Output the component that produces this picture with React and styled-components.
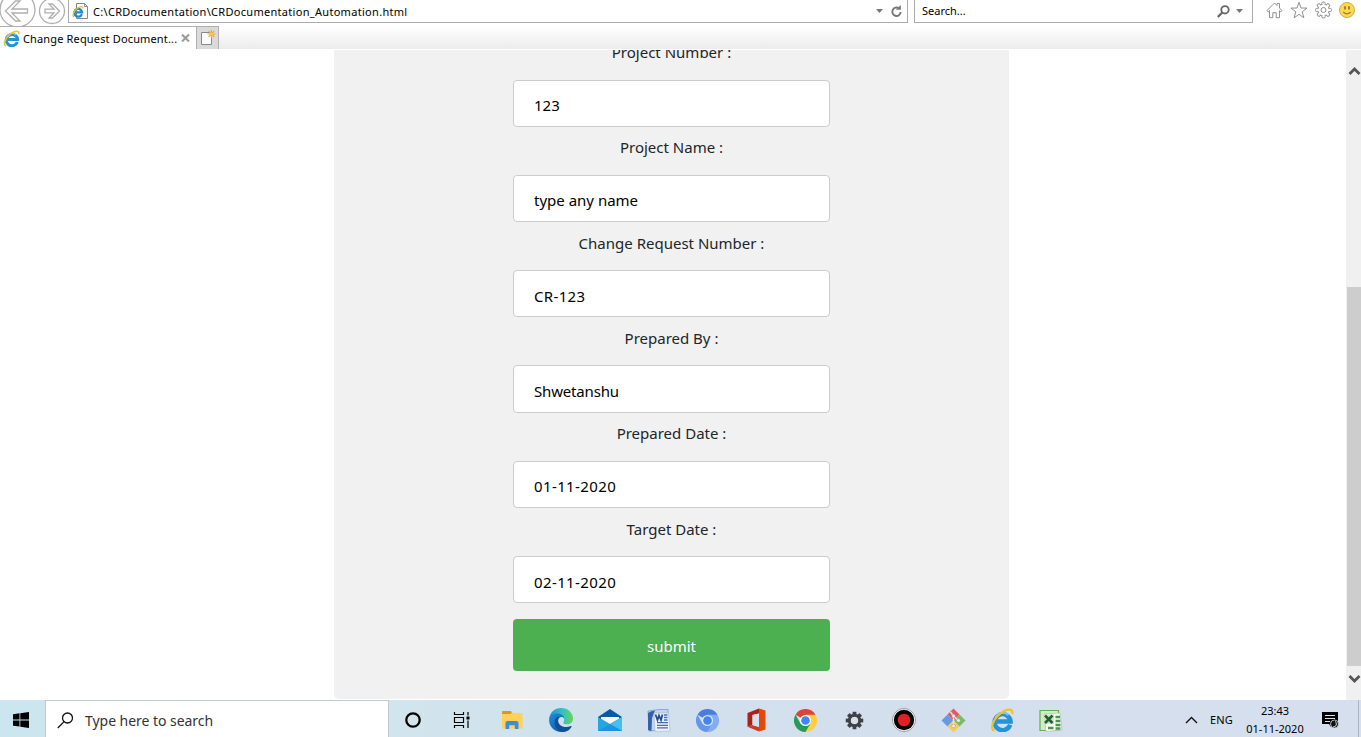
import React from "react";
import styled, { createGlobalStyle } from "styled-components";

const Global = createGlobalStyle`
  * { box-sizing: border-box; }
  body { margin: 0; background: #fff; overflow: hidden; font-family: "Noto Sans", "Open Sans", sans-serif; }
  svg { display: block; flex: none; }
`;

const Screen = styled.div`
  width: 1361px;
  height: 737px;
  display: flex;
  flex-direction: column;
  overflow: hidden;
`;
const NavBar = styled.header`
  height: 26px;
  flex: none;
  display: flex;
  align-items: flex-start;
  background: #fff;
`;
const BarBox = styled.div`
  height: 23px;
  width: ${(p) => p.$width}px;
  margin-right: ${(p) => p.$after}px;
  padding: 0 ${(p) => p.$right}px 0 ${(p) => p.$left}px;
  border: 1px solid #ababab;
  border-top: 0;
  display: flex;
  align-items: center;
`;
const BarActions = styled.div`
  display: flex;
  align-items: center;
  gap: ${(p) => p.$gap}px;
  margin-left: auto;
`;
const Text = styled.span`
  font-size: ${(p) => p.$size || 11}px;
  letter-spacing: ${(p) => p.$track || 0}px;
  color: ${(p) => p.$color || "#000"};
  line-height: 16px;
  white-space: pre;
`;
const Address = styled(Text)`
  margin-left: 4px;
  padding-top: 1px;
`;
const ToolIcons = styled.div`
  display: flex;
  gap: 7px;
  padding-top: 1px;
  margin-left: 12.6px;
`;
const TabStrip = styled.div`
  height: 23px;
  flex: none;
  display: flex;
  background: linear-gradient(#fff, #ececec);
`;
const Tab = styled.div`
  width: 196px;
  border-top: 1px solid #b0b0b0;
  background: #fff;
  display: flex;
  align-items: center;
  padding: 0 6px 0 3px;
`;
const TabTitle = styled(Text)`
  margin-left: 3px;
  padding-top: 1px;
  flex: 1;
`;
const NewTab = styled.div`
  width: 23px;
  border: 1px solid #b0b0b0;
  border-bottom: 0;
  background: #dadada;
  display: flex;
  justify-content: center;
  align-items: center;
`;
const Page = styled.main`
  height: 650px;
  margin-top: 1px;
  flex: none;
  display: flex;
  justify-content: space-between;
  overflow: hidden;
`;
const Sheet = styled.div`
  flex: 1;
  display: flex;
  justify-content: center;
  padding-right: 3px;
`;
const Panel = styled.form`
  width: 675px;
  height: 649px;
  border-radius: 0 0 5px 5px;
  background: #f1f1f1;
  display: flex;
  flex-direction: column;
  align-items: center;
  overflow: hidden;
`;
const Fields = styled.div`
  margin-top: -8.9px;
`;
const Field = styled.div`
  width: 317px;
  height: 95.3px;
  display: flex;
  flex-direction: column;
  align-items: center;
`;
const Label = styled.label`
  height: 24px;
  line-height: 23px;
  font-size: 15px;
  color: #212529;
  white-space: pre;
`;
const Input = styled.div`
  width: 317px;
  height: 47.3px;
  margin-top: 14.45px;
  padding: 2.6px 20px 0;
  border: 1px solid #ccc;
  border-radius: 4px;
  background: #fff;
  color: #000;
  font-size: 15px;
  line-height: 44px;
  letter-spacing: ${(p) => p.$track}px;
  white-space: pre;
`;
const Submit = styled.button`
  width: 317px;
  height: 52px;
  margin-top: 6.1px;
  padding: 3px 0 0;
  border: 0;
  border-radius: 4px;
  background: #4caf50;
  color: #fff;
  font: 15px "Noto Sans", sans-serif;
`;
const Scrollbar = styled.div`
  width: 15px;
  background: #f0f0f0;
  display: flex;
  flex-direction: column;
  align-items: flex-end;
`;
const ScrollArrow = styled.div`
  height: ${(p) => p.$height}px;
  padding-top: ${(p) => p.$top}px;
`;
const Thumb = styled.div`
  width: 14px;
  height: 379px;
  background: #cdcdcd;
`;
const Taskbar = styled.footer`
  height: 37px;
  flex: none;
  display: flex;
  background: linear-gradient(90deg, #cbe6ee, #d1e5ed 30%, #d0e0ec 45%, #d4dfed 65%, #d6dfee);
`;
const Start = styled.div`
  width: 45px;
  display: flex;
  align-items: center;
  justify-content: center;
  padding: 3px 3px 0 0;
`;
const TaskSearch = styled.div`
  width: 344px;
  border: 1px solid #c3c9cc;
  border-bottom: 0;
  background: #fff;
  display: flex;
  align-items: center;
  gap: 11px;
  padding: 3px 0 0 11px;
`;
const Apps = styled.div`
  flex: 1;
  display: flex;
`;
const AppSlot = styled.div`
  width: 49.1px;
  display: flex;
  justify-content: center;
  align-items: center;
  padding: 3px ${(p) => p.$nudge || 0}px 0 0;
`;
const Tray = styled.div`
  display: flex;
  align-items: center;
  padding-top: 3px;
`;
const Language = styled(Text)`
  margin-left: 12px;
`;
const Clock = styled.div`
  width: 70px;
  margin: 0 12px 0 7px;
  display: flex;
  flex-direction: column;
  align-items: center;
  gap: 2px;
`;
const ShowDesktop = styled.div`
  width: 3px;
  margin-left: 19px;
  border-left: 1px solid #a9b3c1;
`;

const IeLogo = ({ size = 17 }) => (
  <svg width={size} height={size} viewBox="0 0 24 24" fill="none">
    <path d="M20.200 16.800A8 8 0 1 1 20.600 13.500H7" stroke="#2593d8" strokeWidth="4.400" />
    <path d="M5.300 10.500a8 8 0 0 1 13.200-3.500" stroke="#6fcdf6" strokeWidth="2" />
    <path d="M4.500 22.600C-.8 21.500 3 11.500 10.500 5.500C16.500.8 23.500-.2 22.300 6" stroke="#f3c321" strokeWidth="2.200" />
  </svg>
);
const PageIe = () => (
  <svg width="17" height="18" viewBox="0 0 17 18">
    <path d="M4.500 1.500h8l3 3v12h-11z" fill="#fff" stroke="#888" />
    <path d="M12.500 1.500v3h3" fill="none" stroke="#888" />
    <g transform="translate(0 3.800) scale(.49)" fill="none">
      <path d="M20.200 16.800A8 8 0 1 1 20.600 13.500H7" stroke="#1b8ccc" strokeWidth="4.600" />
      <path d="M4.500 22.600C-.8 21.500 3 11.500 10.500 5.500C16.500.8 23.500-.2 22.300 6" stroke="#eec01f" strokeWidth="2.500" />
    </g>
  </svg>
);
const BackForward = () => (
  <svg width="68" height="26" viewBox="0 0 68 26" fill="none" stroke="#b0b0b0" strokeWidth="1.300">
    <circle cx="17.500" cy="9.500" r="17.500" />
    <circle cx="52" cy="11" r="12.500" />
    <path d="M5.500 11l10-10h4.500l-8 8h15.500v4H12l8 8h-4.500z" />
    <path d="M59.500 11l-7-7H49l5 5.200h-9v3.600h9L49 18h3.500z" />
  </svg>
);
const Caret = () => (
  <svg width="7" height="4" viewBox="0 0 7 4"><path d="M0 0h7L3.500 4z" fill="#777" /></svg>
);
const Refresh = () => (
  <svg width="13" height="14" viewBox="0 0 13 14" fill="none">
    <path d="M8.800 4.200A4.200 4.200 0 1 0 10.700 8.200" stroke="#777" strokeWidth="1.900" />
    <path d="M5.800 5.800h5V1z" fill="#777" />
  </svg>
);
const Magnifier = () => (
  <svg width="13" height="13" viewBox="0 0 13 13" fill="none" stroke="#666">
    <circle cx="8" cy="4.800" r="3.700" strokeWidth="1.800" />
    <path d="M5.300 7.500L.8 12" strokeWidth="2.300" />
  </svg>
);
const Home = () => (
  <svg width="17" height="18" viewBox="0 0 17 18" fill="#fff" stroke="#909090">
    <path d="M1 9.500L8.500 2l2.500 2.500V2.500h2.500V7L16 9.500l-1.300 1.200-1.200-1v7h-3.300v-5H6.800v5H3.500v-7l-1.200 1z" />
  </svg>
);
const Star = () => (
  <svg width="18" height="18" viewBox="0 0 18 18" fill="#fff" stroke="#909090">
    <path d="M9 1.200l2 5.800 6 .1-4.800 3.700 1.700 6L9 13.300l-4.900 3.500 1.700-6L1 7.100 7 7z" />
  </svg>
);
const teeth = [0, 45, 90, 135, 180, 225, 270, 315];
const GearOutline = () => (
  <svg width="17" height="18" viewBox="0 0 17 18">
    <g stroke="#909090" fill="#fff">
      {teeth.map((a) => <rect key={a} x="6.900" y="1.100" width="3.200" height="4" rx="1" transform={`rotate(${a} 8.500 9)`} />)}
      <circle cx="8.500" cy="9" r="5.700" />
      {teeth.map((a) => <rect key={a} x="7.400" y="2.600" width="2.200" height="3" stroke="none" transform={`rotate(${a} 8.500 9)`} />)}
      <circle cx="8.500" cy="9" r="2.500" />
    </g>
  </svg>
);
const Smile = () => (
  <svg width="16" height="18" viewBox="0 0 16 18" fill="none">
    <circle cx="8" cy="9" r="7.500" fill="#ffd94a" stroke="#c5ab55" />
    <path d="M6 5.300v3.200M10 5.300v3.200" stroke="#86702e" strokeWidth="1.600" />
    <path d="M4.300 11q3.700 3.600 7.400 0" stroke="#96803a" strokeWidth="1.100" />
  </svg>
);
const Close = () => (
  <svg width="9" height="8" viewBox="0 0 9 8"><path d="M1 .5l7 7M8 .5l-7 7" stroke="#9b9b9b" strokeWidth="2.100" /></svg>
);
const NewPage = () => (
  <svg width="17" height="18" viewBox="0 0 17 18">
    <path d="M2.500 3.500h10v12h-10z" fill="#fbfbfb" stroke="#888" />
    <g stroke="#f0a327" strokeWidth="1.200"><path d="M12.500 1v8M8.500 5h8M9.700 2.200l5.600 5.600M15.300 2.200L9.700 7.800" /></g>
    <circle cx="12.500" cy="5" r="1.700" fill="#ffc34d" />
  </svg>
);
const Chevron = ({ down }) => (
  <svg width="13" height="10" viewBox="0 0 13 10" fill="none">
    <path d={down ? "M1.500 2l5 5 5-5" : "M1.500 8l5-5 5 5"} stroke="#555" strokeWidth="2.700" />
  </svg>
);
const WindowsLogo = () => (
  <svg width="16" height="16" viewBox="0 0 16 16"><path d="M0 2.200l6.500-.9v6.200H0zM7.300 1.200L16 0v7.500H7.300zM0 8.400h6.500v6.200L0 13.700zM7.300 8.400H16V16l-8.700-1.200z" /></svg>
);
const TaskMagnifier = () => (
  <svg width="17" height="17" viewBox="0 0 17 17" fill="none" stroke="#111" strokeWidth="1.300">
    <circle cx="10.500" cy="6" r="5" /><path d="M7 9.600L.8 16" />
  </svg>
);
const Cortana = () => (
  <svg width="18" height="18" viewBox="0 0 18 18"><circle cx="9" cy="9" r="6.700" fill="none" stroke="#000" strokeWidth="2.300" /></svg>
);
const TaskView = () => (
  <svg width="17" height="16" viewBox="0 0 17 16" fill="none" stroke="#000">
    <path d="M1.500 0v2.500h9V0M1.500 16v-2.500h9V16M1.500 5.500h9v5h-9zM15 0v3.500M15 8.500V16" strokeWidth="1.200" />
    <path d="M13.500 4.500h3v3h-3z" fill="#000" stroke="none" />
  </svg>
);
const Folder = () => (
  <svg width="22" height="20" viewBox="0 0 22 20">
    <path d="M1 1.700q0-.7.700-.7h8l2 2H20.500q1 0 1 1V18.500H1z" fill="#ffd05b" />
    <path d="M1 1.700q0-.7.700-.7h8l1.300 1.200L9.500 4H1z" fill="#d99b16" />
    <path d="M4.500 19v-6q0-2 2-2h9q2 0 2 2v6h-3.700v-3.700H8.200V19z" fill="#3f8fd0" />
  </svg>
);
const Edge = () => (
  <svg width="24" height="24" viewBox="0 0 24 24">
    <defs>
      <linearGradient id="edgeTop"><stop stopColor="#1a92d4" /><stop offset=".55" stopColor="#34bfc5" /><stop offset="1" stopColor="#66d94f" /></linearGradient>
      <linearGradient id="edgeSide" y2="1"><stop stopColor="#1b8ddb" /><stop offset="1" stopColor="#0c4f9e" /></linearGradient>
    </defs>
    <path d="M.2 11C.8 4.200 5.800 0 12.200 0 19 0 24 5 24 10.200c0 4-2.600 6.100-5.700 6.100-3 0-4.700-1-3.700-2.400 1.900-3.200-.8-6-4.300-6C5 7.900 1.300 9 .2 11z" fill="url(#edgeTop)" />
    <path d="M.1 12C.1 8 4 5.600 8 5.600c3.600 0 6.600 2 7.400 4.600-2.300-2.400-6.400-1.200-6.400 2.900 0 5 5.300 8.800 13 5.300-1.500 3.300-5.300 5.600-9.700 5.600C5.500 24 .1 18.600.1 12z" fill="url(#edgeSide)" />
    <path d="M7.500 9.500c-3.300 3.500-2.700 11.500 4.800 14.200 5.200.6 8.500-2 10.100-4.800.5-.9 0-1-1-.6-6.600 2.400-12.300-1.200-12.300-5.500 0-1.900.7-3 1.600-4-1.300 0-2.300.1-3.200.7z" fill="#124f9b" />
  </svg>
);
const Mail = () => (
  <svg width="24" height="22" viewBox="0 0 24 22">
    <path d="M0 8L12 0l12 8v13H0z" fill="#0c58a7" />
    <path d="M3 8h18V17H3z" fill="#f6f6f6" />
    <path d="M0 8l12 7 12-7v14H0z" fill="#27a4e2" />
    <path d="M24 8v14L12 15z" fill="#45bff0" /><path d="M0 22L12 15l12 7z" fill="#1d94dc" />
  </svg>
);
const Word = () => (
  <svg width="24" height="23" viewBox="0 0 24 23">
    <path d="M1 2L12 .5h9v20L2 22z" fill="#c4d4ec" stroke="#7d9acb" strokeWidth=".8" />
    <path d="M1 4Q4 1.500 8 1.500L5 9 4.500 22 1 21z" fill="#3460ac" />
    <path d="M7 4h14.500L23 22l-15 .5z" fill="#eef3fb" stroke="#a8b6cc" strokeWidth=".6" />
    <path d="M8.500 5.500l2 5.500 1.500-4.500 2 4.500 1.500-5.500" fill="none" stroke="#274c91" strokeWidth="1.800" />
    <path d="M17 6h3.500M17 8.500h3.500M17 11h3.500M10 13.700h11M10 16.300h11M10 18.900h11" stroke="#456fae" strokeWidth="1.300" />
  </svg>
);
const ChromeMark = ({ colors }) => (
  <svg width="23" height="23" viewBox="0 0 24 24">
    <path d="M1.600 6A12 12 0 0 1 22.400 6L12 12z" fill={colors[0]} />
    <path d="M22.400 6A12 12 0 0 1 12 24L17.200 15 12 6z" fill={colors[1]} />
    <path d="M1.600 6A12 12 0 0 0 12 24l5.200-9L12 17.500 6.800 15z" fill={colors[2]} />
    <circle cx="12" cy="12" r="5.800" fill={colors[3]} /><circle cx="12" cy="12" r="4.500" fill={colors[4]} />
  </svg>
);
const Office = () => (
  <svg width="19" height="24" viewBox="0 0 19 24">
    <path d="M12 .5l6.500 2v19L12 23.500z" fill="#e4490b" />
    <path d="M.5 5L12 .5v5L5.500 7v10L.5 18.800z" fill="#ad2016" />
    <path d="M.5 18.800L5 17l7 2v4.500z" fill="#cf3b1d" /><path d="M12 5.500L5.500 7v10L12 19z" fill="#d7e1ed" />
  </svg>
);
const Gear = () => (
  <svg width="19" height="19" viewBox="0 0 20 20">
    {teeth.map((a) => <rect key={a} x="8" y=".8" width="4" height="5" fill="#3f4145" transform={`rotate(${a} 10 10)`} />)}
    <circle cx="10" cy="10" r="5.500" fill="none" stroke="#3f4145" strokeWidth="3" />
  </svg>
);
const Recorder = () => (
  <svg width="24" height="24" viewBox="0 0 24 24">
    <circle cx="12" cy="12" r="11.500" fill="#fff" stroke="#777" strokeWidth=".7" />
    <circle cx="12" cy="12" r="10.200" /><circle cx="12" cy="12" r="6.300" fill="#e21f23" />
  </svg>
);
const Git = () => (
  <svg width="25" height="25" viewBox="0 0 25 25">
    <path d="M12.500.5l6 6-6 6-6-6z" fill="#e8585a" /><path d="M18.500 6.500l6 6-6 6-6-6z" fill="#78bd61" />
    <path d="M6.500 6.500l6 6-6 6-6-6z" fill="#6799e5" /><path d="M12.500 12.500l6 6-6 6-6-6z" fill="#f6cc56" />
    <path d="M9.500 4l3 4v10M12.500 8l5 4.500" fill="none" stroke="#e8e8e8" strokeWidth="1.500" />
    <g fill="#eee" stroke="#999" strokeWidth=".5"><circle cx="12.500" cy="8" r="1.800" /><circle cx="17.500" cy="12.500" r="1.800" /><circle cx="12.500" cy="18" r="1.800" /></g>
  </svg>
);
const Excel = () => (
  <svg width="24" height="23" viewBox="0 0 24 23">
    <path d="M1 1.500h18.500v20H1z" fill="#d3eac9" stroke="#63b045" strokeWidth="1.200" />
    <path d="M5 5l16-1L23 21 7 22.500z" fill="#f8fcf6" stroke="#a2b999" strokeWidth=".6" />
    <path d="M4.500 5.500h10.500v9.500H4.500z" fill="#cfe3c8" /><path d="M6 6.500l7.500 7.500M13.500 6.500L6 14" stroke="#21622b" strokeWidth="2.600" />
    <path d="M16.500 8H21M16.500 12h4.800M16.500 16h5M9 19h5.500M16.500 19.500h5" stroke="#479552" strokeWidth="2.500" />
  </svg>
);
const TrayChevron = () => (
  <svg width="13" height="8" viewBox="0 0 13 8"><path d="M1 7l5.500-5.500L12 7" fill="none" stroke="#111" strokeWidth="1.400" /></svg>
);
const Notifications = () => (
  <svg width="17" height="17" viewBox="0 0 17 17">
    <path d="M0 0h16v12h-3l-4 3-2-3H0z" />
    <path d="M3 3.500h10M3 6.500h10M3 9.500h5" stroke="#d6dfee" />
    <circle cx="12.500" cy="12" r="4" fill="#111" stroke="#d6dfee" strokeWidth=".8" />
    <path d="M11.500 14.500c3 .3 3.500-2.500 2-5" fill="none" stroke="#fff" strokeWidth="1" />
  </svg>
);

const fields = [
  { label: "Project Number :", value: "123", track: 0 },
  { label: "Project Name :", value: "type any name", track: 0 },
  { label: "Change Request Number :", value: "CR-123", track: 0.35 },
  { label: "Prepared By :", value: "Shwetanshu", track: -0.17 },
  { label: "Prepared Date :", value: "01-11-2020", track: 0.38 },
  { label: "Target Date :", value: "02-11-2020", track: 0.38 },
];
const apps = [
  { icon: <Cortana />, nudge: 2 },
  { icon: <TaskView />, nudge: 3 },
  { icon: <Folder /> },
  { icon: <Edge /> },
  { icon: <Mail /> },
  { icon: <Word /> },
  { icon: <ChromeMark colors={["#4e7cdc", "#83acf7", "#6695ee", "#d8e6fb", "#4285ec"]} />, nudge: 1 },
  { icon: <Office />, nudge: 1 },
  { icon: <ChromeMark colors={["#dc4437", "#ffce43", "#289b58", "#fff", "#4285f4"]} />, nudge: 1 },
  { icon: <Gear />, nudge: 2 },
  { icon: <Recorder />, nudge: 1 },
  { icon: <Git />, nudge: 1 },
  { icon: <IeLogo size={24} />, nudge: 2 },
  { icon: <Excel />, nudge: 1 },
];

export default function App() {
  return (
    <Screen>
      <Global />
      <NavBar>
        <BackForward />
        <BarBox $width={840} $left={3} $right={4} $after={6}>
          <PageIe />
          <Address $track={0.3}>C:\CRDocumentation\CRDocumentation_Automation.html</Address>
          <BarActions $gap={7}><Caret /><Refresh /></BarActions>
        </BarBox>
        <BarBox $width={339} $left={7} $right={9} $after={0}>
          <Text>Search...</Text>
          <BarActions $gap={6}><Magnifier /><Caret /></BarActions>
        </BarBox>
        <ToolIcons><Home /><Star /><GearOutline /><Smile /></ToolIcons>
      </NavBar>
      <TabStrip>
        <Tab>
          <IeLogo />
          <TabTitle $track={0.15}>Change Request Document...</TabTitle>
          <Close />
        </Tab>
        <NewTab><NewPage /></NewTab>
      </TabStrip>
      <Page>
        <Sheet>
          <Panel onSubmit={(e) => e.preventDefault()}>
            <Fields>
              {fields.map(({ label, value, track }) => (
                <Field key={label}>
                  <Label>{label}</Label>
                  <Input $track={track}>{value}</Input>
                </Field>
              ))}
            </Fields>
            <Submit>submit</Submit>
          </Panel>
        </Sheet>
        <Scrollbar>
          <ScrollArrow $height={237} $top={16}><Chevron /></ScrollArrow>
          <Thumb />
          <ScrollArrow $height={34} $top={8}><Chevron down /></ScrollArrow>
        </Scrollbar>
      </Page>
      <Taskbar>
        <Start><WindowsLogo /></Start>
        <TaskSearch>
          <TaskMagnifier />
          <Text $size={14} $track={-0.04} $color="#333">Type here to search</Text>
        </TaskSearch>
        <Apps>
          {apps.map(({ icon, nudge }, i) => <AppSlot key={i} $nudge={nudge}>{icon}</AppSlot>)}
        </Apps>
        <Tray>
          <TrayChevron />
          <Language $track={0.2}>ENG</Language>
          <Clock><Text>23:43</Text><Text>01-11-2020</Text></Clock>
          <Notifications />
        </Tray>
        <ShowDesktop />
      </Taskbar>
    </Screen>
  );
}
